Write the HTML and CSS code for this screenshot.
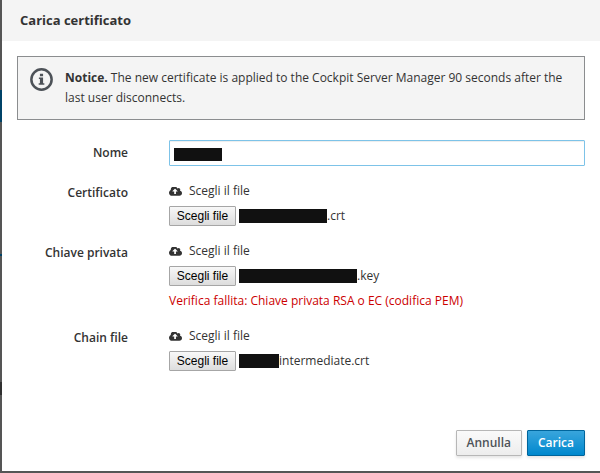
FILE: index.html
```html
<!DOCTYPE html>
<html lang="it">
<head>
<meta charset="utf-8">
<meta name="viewport" content="width=device-width, initial-scale=1">
<title>Carica certificato</title>
<link rel="stylesheet" href="styles.css">
</head>
<body>
<svg class="sprite" aria-hidden="true">
  <symbol id="cloud-upload" viewBox="0 128 1920 1280">
    <path d="M1280 736q0-14-9-23l-352-352q-9-9-23-9t-23 9l-351 351q-10 12-10 24 0 14 9 23t23 9h224v352q0 13 9.500 22.500t22.500 9.500h192q13 0 22.500-9.500t9.500-22.500v-352h224q13 0 22.500-9.500t9.500-22.500zM1920 1024q0 159-112.500 271.500t-271.500 112.500h-1088q-185 0-316.500-131.500t-131.500-316.500q0-130 70-240t188-165q-2-30-2-43 0-212 150-362t362-150q156 0 285.500 87t188.500 231q71-62 166-62 106 0 181 75t75 181q0 76-41 138 130 31 213.500 135.500t83.500 238.500z"/>
  </symbol>
</svg>
<main class="dialog" role="dialog" aria-labelledby="title">
  <header class="dialog-header">
    <h1 id="title">Carica certificato</h1>
  </header>
  <form class="dialog-body">
    <div class="notice">
      <svg class="notice-icon" viewBox="0 0 22 22" aria-hidden="true">
        <circle cx="11" cy="11" r="9.700" fill="none" stroke="#4d5258" stroke-width="2.400"/>
        <path fill="#4d5258" d="M9.500 5.500h3v2.500h-3zM8.500 9h4v5.500h1.200v1.500H8.300v-1.500h1.200v-4h-1z"/>
      </svg>
      <p><strong>Notice.</strong> The new certificate is applied to the Cockpit Server Manager 90 seconds after the last user disconnects.</p>
    </div>
    <div class="row">
      <label class="row-label name-label" for="name">Nome</label>
      <div class="name-field">
        <input id="name" type="text">
        <span class="mask mask-name"></span>
      </div>
    </div>
    <div class="row">
      <label class="row-label" for="cert">Certificato</label>
      <div class="field">
        <div class="hint"><svg class="cloud" aria-hidden="true"><use href="#cloud-upload"/></svg>Scegli il file</div>
        <div class="picker"><button id="cert" class="file-button" type="button">Scegli file</button><span class="mask mask-cert"></span><span>.crt</span></div>
      </div>
    </div>
    <div class="row">
      <label class="row-label" for="key">Chiave privata</label>
      <div class="field">
        <div class="hint"><svg class="cloud" aria-hidden="true"><use href="#cloud-upload"/></svg>Scegli il file</div>
        <div class="picker"><button id="key" class="file-button" type="button">Scegli file</button><span class="mask mask-key"></span><span>.key</span></div>
        <p class="error">Verifica fallita: Chiave privata RSA o EC (codifica PEM)</p>
      </div>
    </div>
    <div class="row">
      <label class="row-label" for="chain">Chain file</label>
      <div class="field">
        <div class="hint"><svg class="cloud" aria-hidden="true"><use href="#cloud-upload"/></svg>Scegli il file</div>
        <div class="picker"><button id="chain" class="file-button" type="button">Scegli file</button><span class="mask mask-chain"></span><span>intermediate.crt</span></div>
      </div>
    </div>
    <footer class="actions">
      <button class="btn" type="button">Annulla</button>
      <button class="btn btn-primary" type="submit">Carica</button>
    </footer>
  </form>
</main>
</body>
</html>
```
FILE: styles.css
```css
* { box-sizing: border-box; }

body {
  margin: 0;
  padding: 0 0 2px 2px;
  min-height: 100vh;
  display: flex;
  background:
    linear-gradient(#004368, #004368) 0 90px / 2px 32px no-repeat,
    linear-gradient(#004368, #004368) 0 254px / 2px 2px no-repeat,
    linear-gradient(#303030, #303030) 0 382px / 2px 13px no-repeat,
    #555;
  color: #333;
  font: 12px/20px "Open Sans", "Noto Sans", sans-serif;
}

h1, p { margin: 0; }

.sprite {
  position: absolute;
  width: 0;
  height: 0;
}

.dialog {
  flex: 1;
  display: flex;
  flex-direction: column;
  background: #fff;
}

.dialog-header {
  padding: 10px 18px 11px;
  background: #f4f4f4;
}

.dialog-header h1 {
  font-size: 13px;
  line-height: 20px;
  font-weight: 700;
}

.dialog-body {
  flex: 1;
  display: flex;
  flex-direction: column;
  gap: 15px;
  padding: 15px;
}

.notice {
  display: flex;
  gap: 12px;
  margin-bottom: 5px;
  padding: 11px 15px 11px 12px;
  border: 1px solid #8b8d8f;
  background: #f4f4f4;
}

.notice-icon {
  flex: none;
  width: 23px;
  height: 23px;
}

.row {
  display: grid;
  grid-template-columns: 111px 1fr;
  column-gap: 41px;
}

.row-label {
  font-weight: 600;
  text-align: right;
  padding-top: 2px;
}

.name-label { padding-top: 3px; }

.name-field { position: relative; }

.name-field input {
  display: block;
  width: 100%;
  height: 26px;
  padding: 2px 6px;
  border: 1px solid #7dc3e8;
  border-radius: 1px;
  background: #fff;
  box-shadow: inset 0 1px 1px rgba(3, 3, 3, 0.075);
  font: inherit;
  outline: 0;
}

.mask {
  height: 14px;
  background: #111;
}

.mask-name {
  position: absolute;
  left: 5px;
  top: 8px;
  width: 48px;
  height: 13px;
}

.mask-cert { width: 88px; }
.mask-key { width: 118px; }
.mask-chain { width: 40px; }

.field {
  display: flex;
  flex-direction: column;
  gap: 5px;
}

.hint {
  display: flex;
  align-items: center;
  gap: 7px;
}

.cloud {
  width: 13px;
  height: 9px;
  fill: #333;
}

.picker {
  display: flex;
  align-items: center;
}

.file-button {
  height: 20px;
  width: 67px;
  margin-right: 3px;
  padding: 0;
  border: 1px solid #a6a6a6;
  border-radius: 1px;
  background: linear-gradient(#f8f8f8, #ddd);
  color: #000;
  font: 12px/18px "Liberation Sans", Arial, sans-serif;
}

.error { color: #c00; }

.actions {
  display: flex;
  justify-content: flex-end;
  gap: 5px;
  margin-top: auto;
}

.btn {
  height: 26px;
  padding: 0 10px;
  border: 1px solid #b7b7b7;
  border-radius: 1px;
  background: linear-gradient(#fafafa, #ededed);
  box-shadow: 0 2px 3px rgba(3, 3, 3, 0.1);
  color: #4d5258;
  font: 600 12px/22px "Open Sans", "Noto Sans", sans-serif;
}

.btn-primary {
  border-color: #00659c;
  background: linear-gradient(#39a5dc, #0088ce);
  color: #fff;
}
```
